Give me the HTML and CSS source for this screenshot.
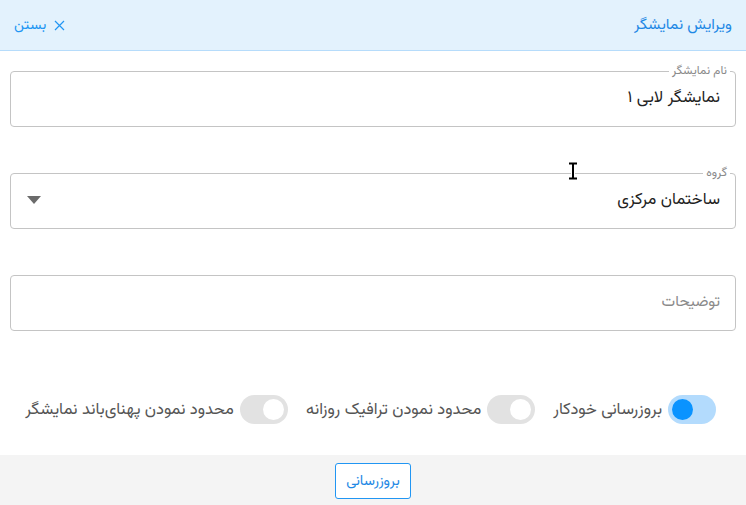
FILE: index.html
```html
<!DOCTYPE html>
<html lang="fa" dir="rtl">
<head>
<meta charset="utf-8">
<title>ویرایش نمایشگر</title>
<link rel="stylesheet" href="styles.css">
</head>
<body>
<div class="dialog">
  <header class="head">
    <div class="title">ویرایش نمایشگر</div>
    <button class="close" type="button">
      <svg width="11" height="11" viewBox="0 0 11 11"><path d="M1 1L10 10M10 1L1 10" stroke="#2196f3" stroke-width="1.2" fill="none"/></svg>
      <span>بستن</span>
    </button>
  </header>
  <main class="body">
    <div class="field">
      <span class="field-label">نام نمایشگر</span>
      <div class="value">نمایشگر لابی ۱</div>
    </div>
    <div class="field select">
      <span class="field-label">گروه</span>
      <div class="value">ساختمان مرکزی</div>
      <svg class="caret" width="14" height="8" viewBox="0 0 14 8"><path d="M0 0H14L7 8Z" fill="#6b6b6b"/></svg>
    </div>
    <div class="field">
      <div class="value placeholder">توضیحات</div>
    </div>
    <div class="toggles">
      <label class="tgl">
        <span class="track on"><span class="knob"></span></span>
        <span class="tgl-text">بروزرسانی خودکار</span>
      </label>
      <label class="tgl">
        <span class="track"><span class="knob"></span></span>
        <span class="tgl-text">محدود نمودن ترافیک روزانه</span>
      </label>
      <label class="tgl">
        <span class="track"><span class="knob"></span></span>
        <span class="tgl-text">محدود نمودن پهنای‌باند نمایشگر</span>
      </label>
    </div>
  </main>
  <footer class="foot">
    <button class="primary" type="button">بروزرسانی</button>
  </footer>
  <svg class="cursor" width="12" height="18" viewBox="0 0 12 18"><path d="M2 1.5H10M2 16.5H10M6 1.5V16.5" stroke="#fff" stroke-width="4" fill="none"/><path d="M2 1.5H10M2 16.5H10M6 1.5V16.5" stroke="#000" stroke-width="2" fill="none"/></svg>
</div>
</body>
</html>
```
FILE: styles.css
```css
* { box-sizing: border-box; }
html, body { margin: 0; padding: 0; }
body {
  width: 746px;
  height: 505px;
  background: #fff;
  font-family: "Vazirmatn", "Noto Sans Arabic", "DejaVu Sans", sans-serif;
  direction: rtl;
  overflow: hidden;
}
.dialog {
  position: relative;
  height: 505px;
  display: flex;
  flex-direction: column;
}
.head {
  height: 51px;
  flex: none;
  background: #e3f2fd;
  border-bottom: 1px solid #b6dcfb;
  display: flex;
  align-items: center;
  justify-content: space-between;
  padding: 0 14px 0 14px;
}
.title {
  color: #1e88e5;
  font-size: 15.5px;
}
.close {
  border: 0;
  background: none;
  padding: 0;
  color: #2196f3;
  font: inherit;
  font-size: 14.5px;
  display: flex;
  align-items: center;
  gap: 8px;
}
.body {
  flex: 1;
  padding: 20px 10px 0 10px;
}
.field {
  position: relative;
  height: 56px;
  border: 1px solid #c4c4c4;
  border-radius: 4px;
  display: flex;
  align-items: center;
  padding: 0 15px 2px 15px;
  margin-bottom: 46px;
}
.field-label {
  position: absolute;
  top: -9px;
  right: 5px;
  padding: 0 3px;
  background: #fff;
  color: #8a8a8a;
  font-size: 12px;
  line-height: 16px;
}
.value {
  font-size: 16.5px;
  color: #222;
}
.placeholder { color: #8a8a8a; font-size: 15.5px; }
.select { justify-content: space-between; }
.caret { margin-left: 1px; }
.toggles {
  display: flex;
  gap: 18px;
  padding-right: 20px;
  margin-top: 64px;
}
.tgl {
  display: flex;
  align-items: center;
  gap: 6px;
  color: #555;
  font-size: 16.5px;
}
.track {
  width: 48px;
  height: 29px;
  border-radius: 15px;
  background: #e2e2e2;
  display: flex;
  align-items: center;
  justify-content: flex-start;
  padding: 0 4px;
}
.track .knob {
  width: 21px;
  height: 21px;
  border-radius: 50%;
  background: #fff;
}
.track.on {
  background: #b3dbfd;
  justify-content: flex-end;
}
.track.on .knob { background: #0a93ff; }
.foot {
  height: 50px;
  flex: none;
  background: #f4f4f4;
  display: flex;
  justify-content: center;
  padding-top: 8px;
}
.primary {
  width: 76px;
  height: 36px;
  border: 1px solid #2196f3;
  border-radius: 3px;
  background: #fff;
  color: #1e88e5;
  font: inherit;
  font-size: 14.5px;
  padding: 0;
}
.cursor {
  position: absolute;
  left: 567px;
  top: 162px;
}
```
